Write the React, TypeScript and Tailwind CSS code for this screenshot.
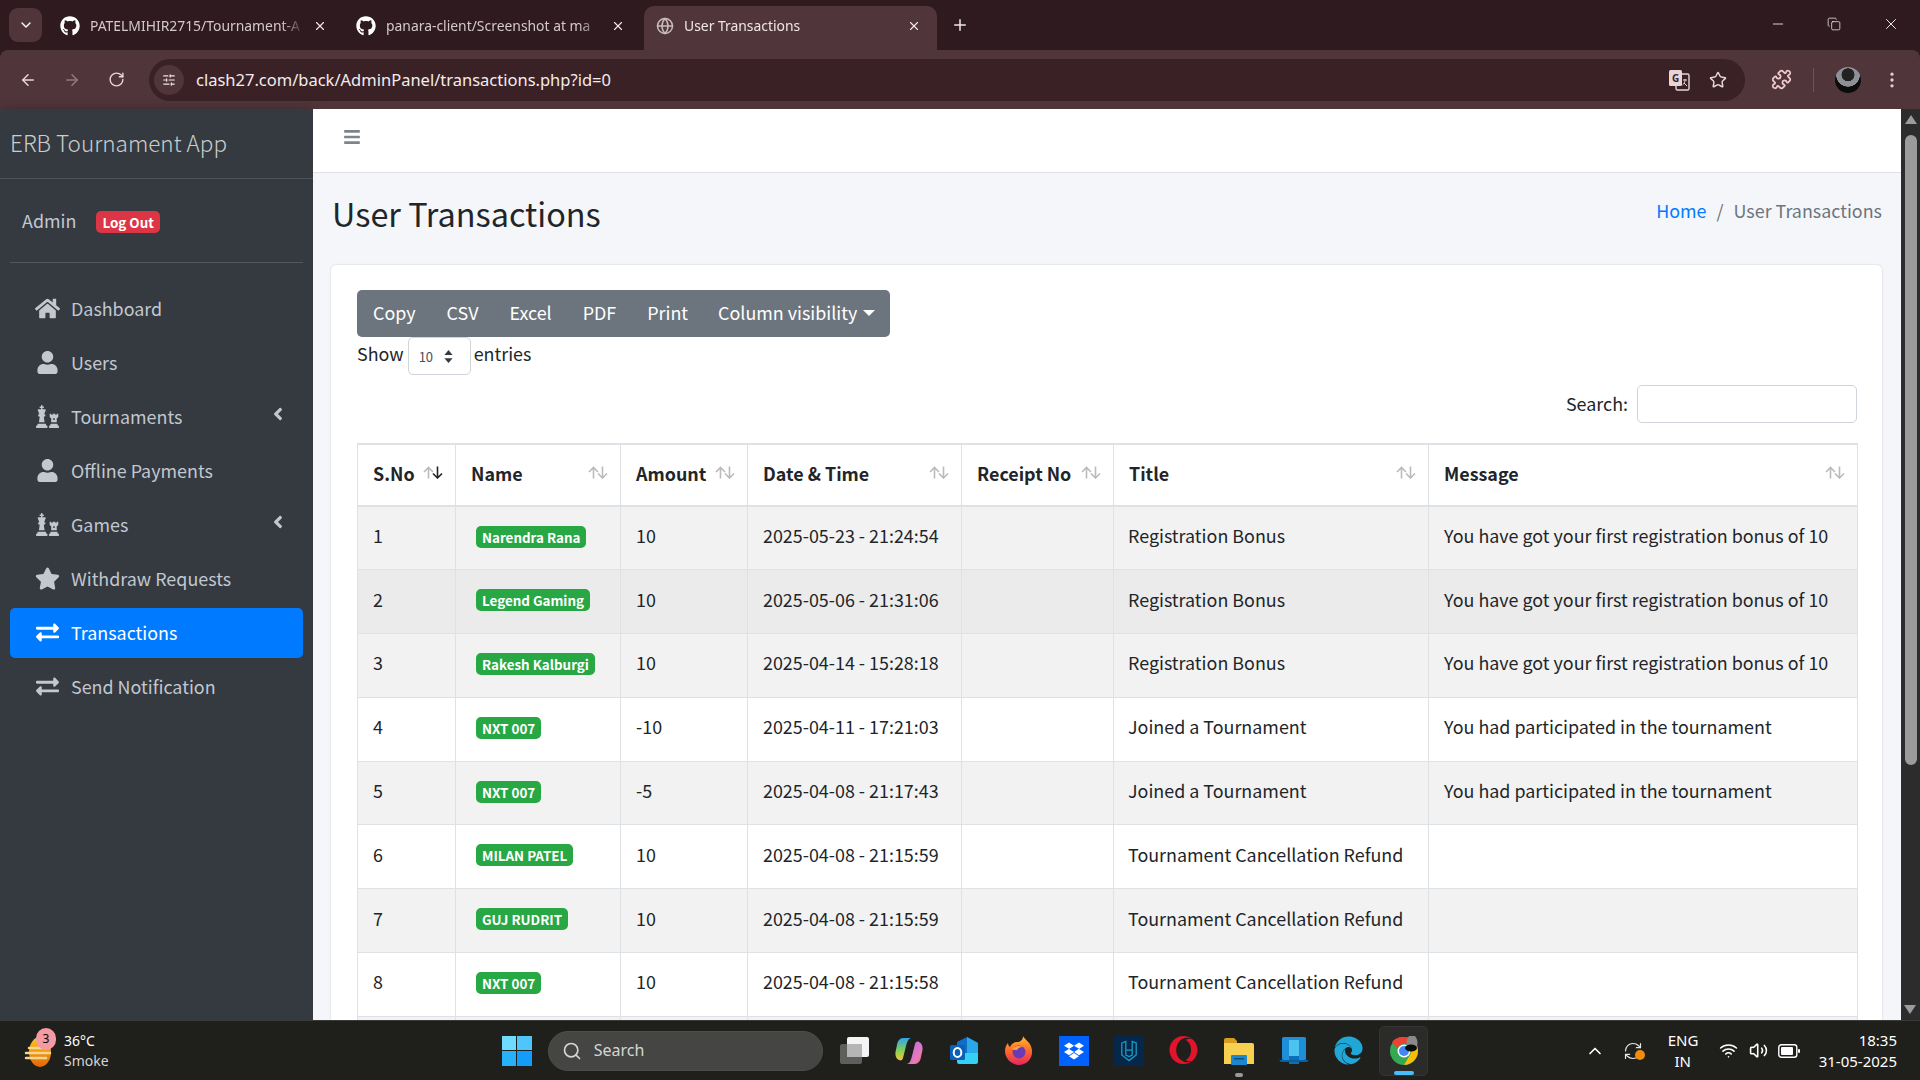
import { ArrowLeft, ArrowRight, RotateCw, Plus, X, ChevronDown, Minus, Star, Puzzle, EllipsisVertical, Search, ChevronUp, Wifi, Volume2, RefreshCw, SlidersHorizontal, Globe, Copy } from 'lucide-react';
import { FaHome, FaUser, FaChess, FaStar, FaExchangeAlt, FaAngleLeft, FaBars, FaGithub, FaDropbox, FaOpera, FaEdge } from 'react-icons/fa';

const rows = [
  { no: 1, name: 'Narendra Rana', amount: '10', date: '2025-05-23 - 21:24:54', title: 'Registration Bonus', message: 'You have got your first registration bonus of 10', bg: 'bg-[#f2f2f2]' },
  { no: 2, name: 'Legend Gaming', amount: '10', date: '2025-05-06 - 21:31:06', title: 'Registration Bonus', message: 'You have got your first registration bonus of 10', bg: 'bg-[#ebebeb]' },
  { no: 3, name: 'Rakesh Kalburgi', amount: '10', date: '2025-04-14 - 15:28:18', title: 'Registration Bonus', message: 'You have got your first registration bonus of 10', bg: 'bg-[#f2f2f2]' },
  { no: 4, name: 'NXT 007', amount: '-10', date: '2025-04-11 - 17:21:03', title: 'Joined a Tournament', message: 'You had participated in the tournament', bg: 'bg-white' },
  { no: 5, name: 'NXT 007', amount: '-5', date: '2025-04-08 - 21:17:43', title: 'Joined a Tournament', message: 'You had participated in the tournament', bg: 'bg-[#f2f2f2]' },
  { no: 6, name: 'MILAN PATEL', amount: '10', date: '2025-04-08 - 21:15:59', title: 'Tournament Cancellation Refund', message: '', bg: 'bg-white' },
  { no: 7, name: 'GUJ RUDRIT', amount: '10', date: '2025-04-08 - 21:15:59', title: 'Tournament Cancellation Refund', message: '', bg: 'bg-[#f2f2f2]' },
  { no: 8, name: 'NXT 007', amount: '10', date: '2025-04-08 - 21:15:58', title: 'Tournament Cancellation Refund', message: '', bg: 'bg-white' },
  { no: 9, name: 'NXT 007', amount: '10', date: '2025-04-08 - 21:15:58', title: 'Tournament Cancellation Refund', message: '', bg: 'bg-[#f2f2f2]' },
];

const columns = [
  { label: 'S.No', width: 'w-[98px]', active: true },
  { label: 'Name', width: 'w-[165px]' },
  { label: 'Amount', width: 'w-[127px]' },
  { label: 'Date & Time', width: 'w-[214px]' },
  { label: 'Receipt No', width: 'w-[152px]' },
  { label: 'Title', width: 'w-[315px]' },
  { label: 'Message', width: 'w-[429px]' },
];

const nav = [
  { label: 'Dashboard', icon: FaHome },
  { label: 'Users', icon: FaUser },
  { label: 'Tournaments', icon: FaChess, arrow: true },
  { label: 'Offline Payments', icon: FaUser },
  { label: 'Games', icon: FaChess, arrow: true },
  { label: 'Withdraw Requests', icon: FaStar },
  { label: 'Transactions', icon: FaExchangeAlt, active: true },
  { label: 'Send Notification', icon: FaExchangeAlt },
];

function SortArrows({ active }: { active?: boolean }) {
  return (
    <svg viewBox="0 0 20 13" className="absolute right-[12px] top-[21px] h-[13px] w-5" fill="none" strokeWidth="1.6">
      <path d="M5.5 12.5V1.5M1 6l4.5-4.5L10 6" stroke="#bbbbbb" />
      <path d="M14.5 .5v11M10 7.5l4.5 4.5L19 7.5" stroke={active ? '#212529' : '#bbbbbb'} />
    </svg>
  );
}

function Tab({ title, github, className }: { title: string; github?: boolean; className: string }) {
  return (
    <div className={`flex h-[44px] items-center pb-[4px] ${className}`}>
      {github ? <FaGithub className="h-[20px] w-[20px] shrink-0 text-white" /> : <Globe className="h-[18px] w-[18px] shrink-0 text-[#c9bcbe]" />}
      <span className="ml-[10px] flex-1 overflow-hidden whitespace-nowrap text-[13.9px] leading-5 [mask-image:linear-gradient(to_left,transparent,black_24px)]">{title}</span>
      <X className="ml-[8px] h-[14px] w-[14px] shrink-0 text-[#f0e6e7]" />
    </div>
  );
}

function Tile({ className, children }: { className?: string; children?: React.ReactNode }) {
  return <div className={`relative flex h-[30px] w-[30px] items-center justify-center ${className ?? ''}`}>{children}</div>;
}

export default function App() {
  return (
    <div className="flex h-screen w-[1920px] flex-col overflow-hidden bg-white font-['Noto_Sans_CJK_SC',sans-serif] text-[17.9px] leading-[27px] text-[#212529]">
      {/* browser chrome */}
      <div className="h-[109px] shrink-0 bg-[#2f1b1f] font-['Noto_Sans',sans-serif]">
        <div className="flex h-[50px] items-end pl-[9px]">
          <div className="mb-[8px] mr-[2px] flex h-[34px] w-[33px] items-center justify-center rounded-[9px] bg-[#50363b]">
            <ChevronDown className="h-4 w-4 text-white" />
          </div>
          <Tab title="PATELMIHIR2715/Tournament-A" github className="w-[296px] pl-[16px] pr-[13px] text-[#d5c8ca]" />
          <Tab title="panara-client/Screenshot at ma" github className="w-[304px] pl-[16px] pr-[19px] text-[#d5c8ca]" />
          <Tab title="User Transactions" className="w-[293px] rounded-t-[10px] bg-[#50363b] pl-[12px] pr-[16px] text-[#f0e6e7]" />
          <Plus className="mb-[16px] ml-[14px] h-[18px] w-[18px] text-[#f0e6e7]" />
          <div className="mb-[17px] ml-auto flex items-center gap-[41px] pr-[20px] text-white">
            <Minus className="h-[16px] w-[16px]" strokeWidth={1.2} />
            <Copy className="h-[14px] w-[14px]" strokeWidth={1.2} />
            <X className="h-[18px] w-[18px]" strokeWidth={1.2} />
          </div>
        </div>
        <div className="flex h-[59px] items-center rounded-t-[8px] bg-[#50363b] pl-[19px] text-[#e8d5d8]">
          <ArrowLeft className="h-[18px] w-[18px]" />
          <ArrowRight className="ml-[26px] h-[18px] w-[18px] text-[#8f7b7e]" />
          <RotateCw className="ml-[27px] h-[17px] w-[17px]" />
          <div className="ml-[24px] flex h-[42px] w-[1596px] items-center rounded-full bg-[#3a2125] pl-[5px] pr-[18px]">
            <div className="flex h-[30px] w-[30px] items-center justify-center rounded-full bg-[#50363b]">
              <SlidersHorizontal className="h-[14px] w-[14px] text-[#f0e6e7]" />
            </div>
            <span className="ml-[12px] text-[16.5px] leading-6 text-[#f4ecec]">clash27.com/back/AdminPanel/transactions.php?id=0</span>
            <svg viewBox="0 0 22 22" className="ml-auto mr-[2px] h-[22px] w-[22px]">
              <rect x="8" y="5" width="13" height="16" rx="1.5" fill="none" stroke="#e8d5d8" strokeWidth="1.4" />
              <rect x="1" y="1" width="13" height="16" rx="1.5" fill="#e8d5d8" />
              <text x="7.5" y="13" textAnchor="middle" fontSize="10" fontWeight="700" fill="#3a2125">G</text>
              <path d="M15 11h4M17 10v1c0 2-1 4-2.500 5M16 14l3 3" stroke="#e8d5d8" strokeWidth="1" fill="none" />
            </svg>
            <Star className="ml-[17px] h-[18px] w-[18px]" />
          </div>
          <Puzzle className="ml-[26px] h-[21px] w-[21px] text-[#f0c9ce]" />
          <div className="ml-[21px] h-[24px] w-px bg-[#705257]" />
          <div className="ml-[21px] h-[26px] w-[26px] rounded-full bg-[radial-gradient(circle_at_50%_30%,#222_28%,#8d9197_30%,#8d9197_52%,#0c0c0c_54%)]" />
          <EllipsisVertical className="ml-[21px] h-[20px] w-[20px] text-[#f0c9ce]" />
        </div>
      </div>

      <div className="flex min-h-0 flex-1">
        {/* sidebar */}
        <aside className="w-[313px] shrink-0 bg-[#343a40] shadow-[0_0_12px_rgba(0,0,0,0.25)]">
          <div className="h-[70px] border-b border-[#4b545c] pl-[10px] pt-[16px] text-[22.5px] font-light leading-[34px] text-[#cbcccd]">ERB Tournament App</div>
          <div className="mx-[10px] flex h-[84px] items-center border-b border-[#4f5962] pl-[12px] text-[#c2c7d0]">
            <span>Admin</span>
            <span className="ml-[20px] mt-[2px] rounded-[5px] bg-[#dc3545] px-[6px] text-[13.4px] font-bold leading-[22px] text-white">Log Out</span>
          </div>
          <nav className="mx-[10px] mt-[21px] flex flex-col gap-[4px]">
            {nav.map((item) => (
              <div key={item.label} className={`relative flex h-[50px] items-center rounded-[5px] pb-[2px] pl-[25px] ${item.active ? 'bg-[#007bff] text-white' : 'text-[#c2c7d0]'}`}>
                <span className="flex w-[36px] shrink-0 justify-start">
                  <item.icon className="h-[23px] w-[25px]" />
                </span>
                <span>{item.label}</span>
                {item.arrow && <FaAngleLeft className="absolute right-[15px] top-[12px] h-[20px] w-[20px]" />}
              </div>
            ))}
          </nav>
        </aside>

        {/* main column */}
        <main className="flex min-w-0 flex-1 flex-col bg-[#f4f6f9]">
          <div className="flex h-[64px] shrink-0 items-center border-b border-[#dee2e6] bg-white pb-[8px] pl-[30px]">
            <FaBars className="h-[18px] w-[18px] text-[#7f8387]" />
          </div>
          <div className="flex h-[92px] shrink-0 items-start justify-between pl-[19px] pr-[19px] pt-[16px]">
            <h1 className="text-[32.4px] leading-[48px]">User Transactions</h1>
            <div className="flex pt-[8px]">
              <span className="text-[#007bff]">Home</span>
              <span className="px-[10px] text-[#6c757d]">/</span>
              <span className="text-[#6c757d]">User Transactions</span>
            </div>
          </div>
          <section className="ml-[18px] mr-[19px] min-h-0 flex-1 rounded-t-[5px] bg-white pl-[26px] pr-[25px] pt-[25px] shadow-[0_0_2px_rgba(0,0,0,0.2)]">
            <div className="flex h-[47px] w-[533px] items-center whitespace-nowrap rounded-[5px] bg-[#6c757d] pb-[2px] pl-[16px] text-white">
              <span>Copy</span>
              <span className="ml-[31px]">CSV</span>
              <span className="ml-[31px]">Excel</span>
              <span className="ml-[31px]">PDF</span>
              <span className="ml-[31px]">Print</span>
              <span className="ml-[30px]">Column visibility</span>
              <span className="ml-[6px] h-0 w-0 border-x-[6px] border-t-[6px] border-x-transparent border-t-white" />
            </div>
            <div className="flex h-[38px] items-start">
              <span className="pt-[3px]">Show</span>
              <div className="ml-[4px] flex h-[38px] w-[63px] items-center rounded-[5px] border border-[#ced4da] pl-[10px] text-[13px] text-[#495057]">
                <span>10</span>
                <svg viewBox="0 0 10 16" className="ml-[11px] h-[13px] w-[9px]" fill="#343a40"><path d="M5 0l5 6H0zM5 16l5-6H0z" /></svg>
              </div>
              <span className="ml-[3px] pt-[3px]">entries</span>
            </div>
            <div className="mt-[10px] flex h-[38px] items-center justify-end">
              <span className="pb-[2px]">Search:</span>
              <div className="ml-[9px] h-[38px] w-[220px] rounded-[5px] border border-[#ced4da] bg-white" />
            </div>
            <table className="mt-[20px] w-[1500px] table-fixed border-collapse">
              <thead>
                <tr className="h-[62px]">
                  {columns.map((col) => (
                    <th key={col.label} className={`relative border border-t-2 border-b-2 border-[#dee2e6] pb-[4px] pl-[15px] text-left font-bold ${col.width}`}>
                      {col.label}
                      <SortArrows active={col.active} />
                    </th>
                  ))}
                </tr>
              </thead>
              <tbody>
                {rows.map((row) => (
                  <tr key={row.no} className={`h-[63.8px] ${row.bg}`}>
                    <td className="border border-[#dee2e6] pb-[5px] pl-[15px]">{row.no}</td>
                    <td className="border border-[#dee2e6] pb-[8px] pl-[20px]">
                      <span className="inline-block rounded-[5px] bg-[#28a745] px-[6px] align-middle text-[13.4px] font-bold leading-[22px] text-white">{row.name}</span>
                    </td>
                    <td className="border border-[#dee2e6] pb-[5px] pl-[15px]">{row.amount}</td>
                    <td className="border border-[#dee2e6] pb-[5px] pl-[15px]">{row.date}</td>
                    <td className="border border-[#dee2e6] pb-[5px] pl-[15px]" />
                    <td className="border border-[#dee2e6] pb-[5px] pl-[14px]">{row.title}</td>
                    <td className="border border-[#dee2e6] pb-[5px] pl-[15px]">{row.message}</td>
                  </tr>
                ))}
              </tbody>
            </table>
          </section>
        </main>

        {/* page scrollbar */}
        <div className="relative w-[19px] shrink-0 bg-[#2c2c2c]">
          <div className="mx-auto mt-[6px] h-0 w-0 border-x-[6px] border-b-[9px] border-x-transparent border-b-[#9b9b9b]" />
          <div className="mx-auto mt-[11px] h-[630px] w-[12px] rounded-full bg-[#9b9b9b]" />
          <div className="absolute bottom-[6px] left-[3px] h-0 w-0 border-x-[6px] border-t-[9px] border-x-transparent border-t-[#9b9b9b]" />
        </div>
      </div>

      {/* windows taskbar */}
      <div className="relative flex h-[60px] shrink-0 items-center border-t border-[#3a3a38] bg-[#1f1f1c] font-['Noto_Sans',sans-serif] text-white">
        <svg viewBox="0 0 30 32" className="absolute left-[24px] top-[15px] h-[32px] w-[30px]">
          <defs>
            <linearGradient id="sun" x1="0" y1="0" x2="0" y2="1">
              <stop offset="0" stopColor="#fbc81c" />
              <stop offset="1" stopColor="#e4660a" />
            </linearGradient>
          </defs>
          <ellipse cx="16" cy="16" rx="11" ry="15" fill="url(#sun)" />
          <path d="M5 12h20M2 17h24M2 22h20" stroke="#f4d68f" strokeWidth="2.500" strokeLinecap="round" />
        </svg>
        <div className="absolute left-[36px] top-[7px] flex h-[22px] w-[20px] items-center justify-center rounded-full bg-[#f59aa3] text-[12px] leading-none text-black">3</div>
        <div className="ml-[64px] text-[14px] leading-[20px]">
          <div>36°C</div>
          <div className="text-[#d5d5d5]">Smoke</div>
        </div>
        <div className="ml-[393px] grid h-[30px] w-[30px] grid-cols-2 gap-[1px]">
          <div className="bg-[#6fdcff]" />
          <div className="bg-[#4fc6fb]" />
          <div className="bg-[#27b1fb]" />
          <div className="bg-[#129dfb]" />
        </div>
        <div className="ml-[16px] flex h-[40px] w-[275px] items-center rounded-full border border-[#4d4d4b] bg-[#454543] pl-[13px] text-[#d5d5d5]">
          <Search className="h-[20px] w-[20px]" />
          <span className="ml-[12px] text-[16px]">Search</span>
        </div>
        <div className="ml-[16px] flex items-center gap-[25px]">
          <Tile>
            <svg viewBox="0 0 30 30" className="h-[30px] w-[30px]">
              <rect x="1" y="8" width="22" height="20" rx="2" fill="#5e5e5c" />
              <rect x="8" y="1" width="22" height="20" rx="2" fill="#f4f4f4" />
              <rect x="8" y="8" width="15" height="13" fill="#b5b5b5" />
            </svg>
          </Tile>
          <Tile>
            <svg viewBox="0 0 30 30" className="h-[30px] w-[30px]">
              <defs>
                <linearGradient id="cop1" x1="0" y1="0" x2="0" y2="1">
                  <stop offset="0" stopColor="#2aa8e8" />
                  <stop offset=".6" stopColor="#8fd14f" />
                  <stop offset="1" stopColor="#f5c23c" />
                </linearGradient>
                <linearGradient id="cop2" x1="0" y1="0" x2="1" y2="1">
                  <stop offset="0" stopColor="#b66cf0" />
                  <stop offset=".7" stopColor="#e77ab8" />
                  <stop offset="1" stopColor="#f0683c" />
                </linearGradient>
              </defs>
              <path d="M9 2h8c-3 1-4 4-5 8l-3 12c-.5 2-2 3-4 2-2.500-1-4-4-3.500-8L3 9c.5-4 3-7 6-7z" fill="url(#cop1)" />
              <path d="M21 28h-8c3-1 4-4 5-8l3-12c.5-2 2-3 4-2 2.500 1 4 4 3.500 8L27 21c-.5 4-3 7-6 7z" fill="url(#cop2)" />
            </svg>
          </Tile>
          <Tile>
            <svg viewBox="0 0 30 30" className="h-[30px] w-[30px]">
              <path d="M8 6l10-5 11 6v10H8z" fill="#0f6fc6" />
              <path d="M18 1l11 6v10H18z" fill="#28a8ea" />
              <path d="M8 17h21v9a2 2 0 0 1-2 2H10a2 2 0 0 1-2-2z" fill="#35d0f5" />
              <rect x="1" y="9" width="15" height="15" rx="1.5" fill="#0a62b8" />
              <ellipse cx="8.500" cy="16.500" rx="3.800" ry="4.500" fill="none" stroke="#fff" strokeWidth="2" />
            </svg>
          </Tile>
          <Tile>
            <svg viewBox="0 0 30 30" className="h-[30px] w-[30px]">
              <defs>
                <linearGradient id="ff" x1="0" y1="0" x2="0" y2="1">
                  <stop offset="0" stopColor="#ffbd2e" />
                  <stop offset=".5" stopColor="#ff6a2b" />
                  <stop offset="1" stopColor="#e5255f" />
                </linearGradient>
              </defs>
              <path d="M19 0c1 3 8 6 9 14 1 9-6 15-13 15S1 23 1 15C1 12 2 9 4 7c0 2 1 3 2 4 1-3 4-5 7-5 3 0 6-2 6-6z" fill="url(#ff)" />
              <circle cx="15" cy="16" r="6.500" fill="#6a3bb8" />
              <path d="M8 13c3-3 7-4 11-2-3 0-5 1-6 3-2 0-4 0-5-1z" fill="#ffa52e" />
            </svg>
          </Tile>
          <Tile className="bg-[#0061fe]"><FaDropbox className="h-[20px] w-[20px] text-white" /></Tile>
          <Tile className="bg-[#04274a]">
            <svg viewBox="0 0 30 30" className="h-[24px] w-[24px]" fill="none" stroke="#1b9cc4" strokeWidth="1.6">
              <path d="M6 5l5-2v11h8V3l5 2v15l-9 7-9-7z" />
              <path d="M11 14v6l4 2 4-2v-6" />
            </svg>
          </Tile>
          <Tile><FaOpera className="h-[29px] w-[29px] text-[#e0152b]" /></Tile>
          <Tile>
            <svg viewBox="0 0 30 28" className="h-[28px] w-[30px]">
              <path d="M0 3a2 2 0 0 1 2-2h8l3 3v4H0z" fill="#d89c1e" />
              <path d="M0 6h28a2 2 0 0 1 2 2v19H0z" fill="#f8d04f" />
              <rect x="7" y="18" width="16" height="10" rx="1" fill="#1a87cf" />
              <rect x="10" y="21" width="10" height="1.500" fill="#0c4f80" />
            </svg>
            <div className="absolute -bottom-[11px] left-[11px] h-[4px] w-[8px] rounded-full bg-[#9a9a9a]" />
          </Tile>
          <Tile>
            <svg viewBox="0 0 30 30" className="h-[30px] w-[30px]">
              <rect x="3" y="1" width="24" height="23" rx="1.500" fill="#1c8fd8" />
              <rect x="10" y="4" width="10" height="22" fill="#4fc3f0" />
              <rect x="10" y="20" width="10" height="8" fill="#0d6fb8" />
              <path d="M0 24h30l-2 2H2z" fill="#0b5f9e" />
            </svg>
          </Tile>
          <Tile><FaEdge className="h-[29px] w-[29px] text-[#1fa7d8]" /></Tile>
          <Tile>
            <div className="absolute -bottom-[10px] -left-[10px] -right-[9px] -top-[10px] rounded-[5px] border border-[#333331] bg-[#2b2b29]" />
            <svg viewBox="0 0 30 30" className="relative h-[30px] w-[30px]">
              <circle cx="15" cy="15" r="14" fill="#35a853" />
              <path d="M15 1a14 14 0 0 1 12.100 7H15a7 7 0 0 0-6.500 4.300L3 6a14 14 0 0 1 12-5z" fill="#ea4335" />
              <path d="M27.100 8A14 14 0 0 1 15 29l6.200-10.500A7 7 0 0 0 21 10z" fill="#fbbc04" />
              <circle cx="15" cy="15" r="6.500" fill="#fff" />
              <circle cx="15" cy="15" r="5" fill="#4285f4" />
              <ellipse cx="23" cy="7" rx="5.500" ry="8" fill="#8a8a8a" />
              <ellipse cx="22" cy="12" rx="6" ry="3.500" fill="#0a0a0a" />
            </svg>
            <div className="absolute -bottom-[9px] left-[5px] h-[4px] w-[20px] rounded-full bg-[#47bdfb]" />
          </Tile>
        </div>
        <div className="ml-auto flex items-center pr-[23px]">
          <ChevronUp className="h-[20px] w-[20px]" />
          <div className="relative ml-[18px] h-[20px] w-[20px]">
            <RefreshCw className="h-[20px] w-[20px] text-[#e8e8e8]" strokeWidth={1.4} />
            <div className="absolute bottom-[1px] right-[-2px] h-[10px] w-[10px] rounded-full bg-[#f28c0f]" />
          </div>
          <div className="ml-[25px] w-[30px] text-center text-[15px] leading-[21px]">
            <div>ENG</div>
            <div>IN</div>
          </div>
          <Wifi className="ml-[21px] h-[19px] w-[19px]" />
          <Volume2 className="ml-[11px] h-[19px] w-[19px]" />
          <svg viewBox="0 0 22 14" className="ml-[10px] h-[14px] w-[22px]" fill="none">
            <rect x=".8" y=".8" width="18" height="12.400" rx="2.500" stroke="#fff" strokeWidth="1.400" />
            <rect x="3" y="3" width="12" height="8" rx="1" fill="#fff" />
            <rect x="20" y="5" width="2" height="4" rx="1" fill="#fff" />
          </svg>
          <div className="ml-[19px] text-right text-[15px] leading-[21px]">
            <div>18:35</div>
            <div>31-05-2025</div>
          </div>
        </div>
      </div>
    </div>
  );
}
